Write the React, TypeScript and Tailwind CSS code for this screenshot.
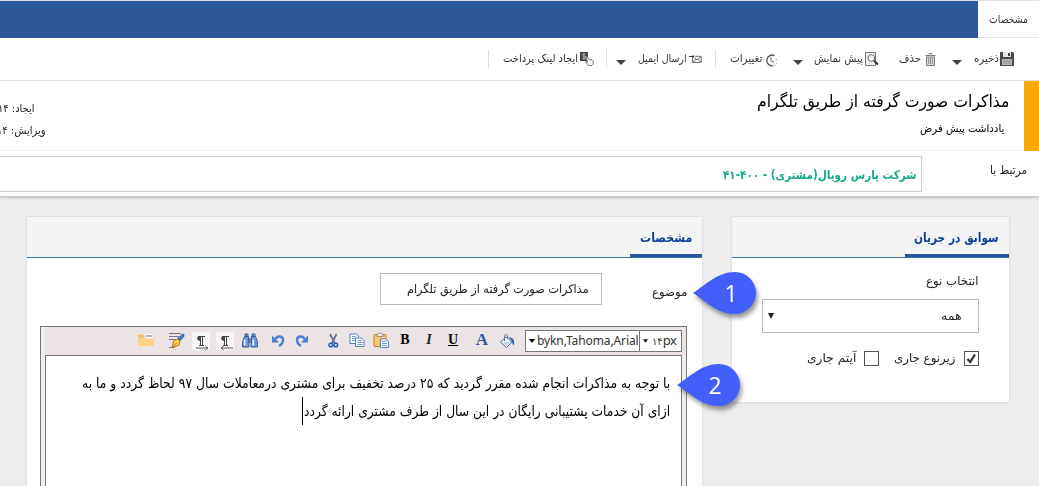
import { useLayoutEffect, useRef, useState, type ReactNode } from "react";

/* A single line of Persian text that condenses itself to the width of its column. */
function Fit({ className = "", children }: { className?: string; children: ReactNode }) {
  const box = useRef<HTMLSpanElement>(null);
  const line = useRef<HTMLSpanElement>(null);
  const [ratio, setRatio] = useState(1);
  useLayoutEffect(() => {
    if (box.current && line.current && line.current.offsetWidth > 0) {
      setRatio(box.current.offsetWidth / line.current.offsetWidth);
    }
  }, []);
  return (
    <span ref={box} className={`block shrink-0 whitespace-nowrap ${className}`}>
      <span ref={line} className="inline-block origin-right" style={{ transform: `scaleX(${ratio})` }}>
        {children}
      </span>
    </span>
  );
}

function Caret({ className = "" }: { className?: string }) {
  return (
    <svg className={`h-[5px] w-[10px] shrink-0 ${className}`} viewBox="0 0 10 5">
      <path d="M0 0h10L5 5z" fill="#444" />
    </svg>
  );
}

function SaveIcon() {
  return (
    <svg className="h-[14px] w-[14px] shrink-0" viewBox="0 0 14 14">
      <path d="M0 0h13l1 1v13H0z" fill="#4a4a4a" />
      <path d="M3 0h8v5H3z" fill="#e4e4e4" />
      <path d="M8 1h2v3H8z" fill="#444" />
      <path d="M2 7h10v6H2z" fill="#b9b9b9" />
      <path d="M3 9h8M3 11h8" stroke="#8b8b8b" />
    </svg>
  );
}
function TrashIcon() {
  return (
    <svg className="h-[13px] w-[11px] shrink-0" viewBox="0 0 11 13">
      <path d="M4 1.5V.5h3v1M.5 2.5h10" stroke="#777" fill="none" />
      <path d="M1.5 4h8v8.5h-8z" fill="#ddd" stroke="#777" />
      <path d="M3.7 5v6M5.5 5v6M7.3 5v6" stroke="#888" />
    </svg>
  );
}
function PreviewIcon() {
  return (
    <svg className="h-[14px] w-[14px] shrink-0" viewBox="0 0 14 14">
      <path d="M.5.5h10v13H.5z" fill="#f2f2f2" stroke="#777" />
      <circle cx="6.3" cy="6" r="3.4" fill="#fafafa" stroke="#666" />
      <path d="M9 8.8l4 3.7" stroke="#333" strokeWidth="2" />
    </svg>
  );
}
function ClockIcon() {
  return (
    <svg className="h-[13px] w-[13px] shrink-0" viewBox="0 0 13 13">
      <path d="M9.6 1.6A5.4 5.4 0 1 0 8 11.8" fill="none" stroke="#555" strokeWidth="1.3" />
      <path d="M6 3.2v3.7l3 1.2" fill="none" stroke="#666" />
      <path d="M11 4.500l1 2M11 8l.5 1.500M8.500 11.900l2-1" stroke="#aaa" />
    </svg>
  );
}
function MailIcon() {
  return (
    <svg className="h-[9px] w-[13px] shrink-0" viewBox="0 0 13 9">
      <path d="M3.500 2.300v5.200h8.800V1.300H6" fill="#f3f3f3" stroke="#777" />
      <path d="M4 7l3-2.500M12 7L9 4.500M5.500 2.500L8 5l4-3.300" fill="none" stroke="#777" />
      <path d="M0 1.500h5M3.300 0L5 1.500 3.300 3" fill="none" stroke="#333" />
    </svg>
  );
}
function PayIcon() {
  return (
    <svg className="h-[14px] w-[14px] shrink-0" viewBox="0 0 14 14">
      <rect width="8" height="9" fill="#444" />
      <path d="M5.500 2H3v2.300h2.500v2.200H2.500M4 1v7" fill="none" stroke="#bbb" strokeWidth=".8" />
      <path d="M6 5.300l1.200-.5 1.700 2.700 3.500.5 1 1-.5 3.500-1 1H8.500L5.500 10l.6-.7 1.600.8z" fill="#fff" stroke="#777" />
    </svg>
  );
}

function FolderIcon() {
  return (
    <svg className="h-5 w-5 -translate-y-px" viewBox="0 0 20 20">
      <path d="M2 4.500h5l1 1.500h9.500V16H2z" fill="#f4bd62" />
      <path d="M9 3.500h8v6H9z" fill="#fdfdfd" stroke="#ddd" strokeWidth=".5" />
      <path d="M10 5h6v2h-6z" fill="#b4b4bd" />
      <path d="M2 7.500h6l1 1h8.500v7.500H2z" fill="#ffd486" />
    </svg>
  );
}
function FormatIcon() {
  return (
    <svg className="h-5 w-5" viewBox="0 0 20 20">
      <path d="M3 2.500h12M3 5.500h10M3 8.500h7M3 16.500h5" stroke="#777" />
      <path d="M16.500 3H18v2.500l-4.500 5L11 8z" fill="#3d78c9" stroke="#315da0" strokeWidth=".6" />
      <path d="M11.500 8l2.500 2-1 4-7 3 1.500-7z" fill="#ffd34d" stroke="#b97919" />
      <path d="M6.500 16.500l4-4.500" stroke="#93601a" />
    </svg>
  );
}
function ParagraphIcon({ back = false }: { back?: boolean }) {
  return (
    <svg className="h-5 w-5" viewBox="0 0 20 20">
      <rect x="1" y="1" width="18" height="18" fill="#f7f6f6" />
      <path d="M11.500 14.500V5.500M9.500 14.500V5.500M7 5.500h7M8 14.500h5" stroke="#444" fill="none" />
      <path d="M9.500 10C5 10 5 5 9.500 5z" fill="#444" />
      {back ? (
        <path d="M18 17H6M8.500 15L6 17l2.500 2" fill="none" stroke="#555" />
      ) : (
        <path d="M5 17h12M14.500 15l2.500 2-2.500 2" fill="none" stroke="#555" />
      )}
    </svg>
  );
}
function BinocularsIcon() {
  return (
    <svg className="h-5 w-5" viewBox="0 0 20 20">
      <g fill="#6f97d8" stroke="#2c5699" strokeWidth=".9">
        <path d="M5 3h3v2.500H5zM12 3h3v2.500h-3z" />
        <path d="M4.500 5.500h4l.5 4.500v6H2.500v-5.500zM11.500 5.500h4l2 5V16H11v-6z" />
        <path d="M8.500 8h3v3h-3z" />
      </g>
      <path d="M4.700 8.500v6M13.200 8.500v6" stroke="#e3edfd" strokeWidth="1.700" />
    </svg>
  );
}
function UndoIcon({ flip = false }: { flip?: boolean }) {
  return (
    <svg className={flip ? "h-5 w-5 -scale-x-100" : "h-5 w-5"} viewBox="0 0 20 20">
      <path d="M7.500 8c2-3.800 7.500-3.300 7.500 1 0 3-1.500 4.500-4 6" fill="none" stroke="#4a7dd6" strokeWidth="2.400" />
      <path d="M4 4.500v7h7z" fill="#4a7dd6" />
    </svg>
  );
}
function CutIcon() {
  return (
    <svg className="h-5 w-5" viewBox="0 0 20 20">
      <path d="M7 3l5 9.500M13.500 3L8.800 12.500" stroke="#64748c" strokeWidth="1.700" />
      <circle cx="7.800" cy="14" r="1.800" fill="none" stroke="#2457b4" strokeWidth="1.500" />
      <circle cx="12.800" cy="14" r="1.800" fill="none" stroke="#2457b4" strokeWidth="1.500" />
    </svg>
  );
}
function CopyIcon() {
  return (
    <svg className="h-5 w-5" viewBox="0 0 20 20">
      <g fill="#f7fbff" stroke="#5481c6">
        <path d="M3 3h6.500l2 2v7.500H3z" />
        <path d="M8.500 7h6L17 9.500v6H8.500z" />
      </g>
      <path d="M5 5.500h4M5 7.500h3M5 9.500h3M10.500 9.500h4M10.500 11.500h5M10.500 13.500h5" stroke="#6c9adb" />
    </svg>
  );
}
function PasteIcon() {
  return (
    <svg className="h-5 w-5" viewBox="0 0 20 20">
      <rect x="3" y="3.500" width="12" height="12" rx="1" fill="#f7c871" stroke="#bd812e" />
      <path d="M6 5.500v-2L8 2h2l2 1.500v2z" fill="#e8e8e8" stroke="#777" strokeWidth=".7" />
      <path d="M9.500 8h5l3 2.500v6h-8z" fill="#f9fcff" stroke="#5481c6" />
      <path d="M11 10.500h4M11 12.500h5M11 14.500h5" stroke="#6c9adb" />
    </svg>
  );
}
function FillIcon() {
  return (
    <svg className="h-5 w-5" viewBox="0 0 20 20">
      <path d="M9 6l6 5-5.500 5.500L3.500 11z" fill="#f3f8ff" stroke="#51719c" />
      <path d="M5.500 11h8L9.500 15z" fill="#bcd2ef" />
      <path d="M7.500 10V5c0-2 3-2 3 0v3" fill="none" stroke="#64748b" />
      <path d="M11.500 6.500c4-.5 6.500 2 5.500 8-1.500-1-2-3-2-4.500z" fill="#2861bd" />
    </svg>
  );
}

function Letter({ className, children }: { className: string; children: ReactNode }) {
  return (
    <span className={`flex h-5 w-5 items-center justify-center pb-[2px] font-['Liberation_Serif',serif] leading-5 ${className}`}>
      {children}
    </span>
  );
}

function Marker({ label, className }: { label: string; className: string }) {
  return (
    <div dir="ltr" className={`absolute z-10 h-[42px] w-[63px] drop-shadow-[2px_4px_2px_rgba(0,0,0,0.4)] ${className}`}>
      <svg className="absolute inset-0 h-full w-full" viewBox="0 0 63 42">
        <path d="M0 21C13 13 24 0 42 0a21 21 0 0 1 0 42C24 42 13 29 0 21z" fill="#425ffb" />
      </svg>
      <span className="absolute left-[23px] top-0 w-[30px] text-center font-['Open_Sans',sans-serif] text-[23px] leading-[42px] text-white">
        {label}
      </span>
    </div>
  );
}

function CardHeader({ tab, children }: { tab: string; children: ReactNode }) {
  return (
    <div className="flex h-[41px] border-b border-[#3a74ac] bg-[#f4f4f4]">
      <div className={`h-10 border-b-[3px] border-[#2a579a] pr-[10px] pt-[11px] text-[13px] font-bold leading-5 text-[#0c3f97] ${tab}`}>
        {children}
      </div>
    </div>
  );
}

export default function App() {
  return (
    <div dir="rtl" className="relative flex h-[486px] w-[1039px] flex-col overflow-hidden bg-[#ededed] font-['DejaVu_Sans',sans-serif] text-[11px] text-[#222]">
      <div className="flex h-[38px] shrink-0 border-t border-[#dce3ed] bg-[#2a579a]">
        <div className="h-full w-[61px] border-b border-[#e5e5e5] bg-white pr-[11px] pt-[9px] text-[11px] leading-5 text-[#333]">
          <Fit className="w-[39px]">مشخصات</Fit>
        </div>
      </div>

      <div className="flex h-[43px] shrink-0 items-center border-b border-[#ddd] bg-white pr-[25px] text-[11px] leading-5 text-[#333]">
        <SaveIcon />
        <Fit className="mr-px w-[25px]">ذخیره</Fit>
        <Caret className="mr-[12px] mt-[7px]" />
        <span className="mr-[16px] flex"><TrashIcon /></span>
        <Fit className="mr-[4px] w-[22px]">حذف</Fit>
        <span className="mr-[20px] flex"><PreviewIcon /></span>
        <Fit className="mr-[2px] w-[49px]">پیش نمایش</Fit>
        <Caret className="mr-[11px] mt-[7px]" />
        <span className="mr-[15px] mt-[3px] flex"><ClockIcon /></span>
        <Fit className="mr-[3px] w-[33px]">تغییرات</Fit>
        <span className="mr-[13px] h-[18px] w-px bg-[#ddd]" />
        <span className="mr-[13px] flex"><MailIcon /></span>
        <Fit className="mr-[2px] w-[49px]">ارسال ایمیل</Fit>
        <Caret className="mr-[12px] mt-[7px]" />
        <span className="mr-[9px] h-[18px] w-px bg-[#ddd]" />
        <span className="mr-[12px] flex"><PayIcon /></span>
        <Fit className="mr-[2px] w-[75px]">ایجاد لینک پرداخت</Fit>
        <span className="mr-[14px] h-[18px] w-px bg-[#ddd]" />
      </div>

      <div className="flex h-[70px] shrink-0 border-b border-[#f4f4f4] bg-white">
        <div className="h-[70px] w-[15px] shrink-0 bg-[#fba704]" />
        <div className="flex-1 pr-[15px] pt-[7px] text-black">
          <Fit className="w-[252px] text-[17px] leading-[26px]">مذاکرات صورت گرفته از طریق تلگرام</Fit>
          <Fit className="mr-[5px] mt-[5px] w-[84px] text-[11px] leading-5">یادداشت پیش فرض</Fit>
        </div>
        <div className="w-[46px] shrink-0 pt-[17px] text-[11px] leading-[22px] text-[#222]">
          <Fit className="mr-[12px] w-[37px]">ایجاد: ۱۴</Fit>
          <Fit className="w-[49px]">ویرایش: ۱۴</Fit>
        </div>
      </div>

      <div className="flex h-[46px] shrink-0 border-b border-[#ccc] bg-white pr-[12px] shadow-[0_1px_2px_rgba(0,0,0,0.2)]">
        <Fit className="mt-[9px] w-[37px] text-[12px] leading-5">مرتبط با</Fit>
        <div className="mr-[68px] mt-[5px] h-[36px] flex-1 border border-l-0 border-[#ccc] pr-[4px] pt-[8px]">
          <Fit className="w-[194px] text-[12px] font-bold leading-5 text-[#17a98c]">شرکت پارس رویال(مشتری) - ۴۰۰-۴۱</Fit>
        </div>
      </div>

      <div className="flex flex-1 items-start gap-[30px] pr-[30px] pt-[20px]">
        <section className="h-[185px] w-[277px] shrink-0 bg-white shadow-[0_0_2px_rgba(0,0,0,0.18)]">
          <CardHeader tab="w-[104px]"><Fit className="w-[85px]">سوابق در جریان</Fit></CardHeader>
          <div className="px-[30px] pt-[13px] text-[12px] leading-5">
            <Fit className="w-[53px]">انتخاب نوع</Fit>
            <div className="mt-[8px] flex h-[34px] items-center justify-between border border-[#bbb] pl-[5px] pr-[16px]">
              <Fit className="w-[21px]">همه</Fit>
              <svg className="h-[6px] w-[6px]" viewBox="0 0 6 6"><path d="M0 0h6L3 6z" fill="#222" /></svg>
            </div>
            <div className="mt-[15px] flex items-center">
              <span className="flex h-[15px] w-[15px] items-center justify-center border border-[#555]">
                <svg className="h-[11px] w-[11px]" viewBox="0 0 11 11"><path d="M1.500 6l2.700 3L9 1.500" fill="none" stroke="#333" strokeWidth="2.300" /></svg>
              </span>
              <Fit className="mr-[8px] w-[62px]">زیرنوع جاری</Fit>
              <span className="mr-[15px] h-[15px] w-[15px] border border-[#555]" />
              <Fit className="mr-[8px] w-[49px]">آیتم جاری</Fit>
            </div>
          </div>
        </section>

        <section className="h-[269px] w-[675px] shrink-0 bg-white shadow-[0_0_2px_rgba(0,0,0,0.18)]">
          <CardHeader tab="w-[72px]"><Fit className="w-[52px]">مشخصات</Fit></CardHeader>
          <div className="flex pr-[15px] pt-[15px]">
            <Fit className="mt-[9px] w-[35px] text-[12px] leading-5">موضوع</Fit>
            <div className="mr-[50px] h-[32px] w-[222px] border border-[#bbb] pr-[12px] pt-[5px]">
              <Fit className="w-[182px] text-[12px] leading-5">مذاکرات صورت گرفته از طریق تلگرام</Fit>
            </div>
          </div>

          <div className="mr-[15px] mt-[21px] flex h-[170px] w-[647px] flex-col border border-b-0 border-[#777] bg-[#eee]">
            <div dir="ltr" className="ml-1 flex h-[28px] shrink-0 items-center bg-[#ece4e4] pl-[91px]">
              <span className="mr-[10px]"><FolderIcon /></span>
              <span className="mr-[5px]"><FormatIcon /></span>
              <span className="mr-[4px]"><ParagraphIcon /></span>
              <span className="mr-[5px]"><ParagraphIcon back /></span>
              <span className="mr-[8px]"><BinocularsIcon /></span>
              <span className="mr-[4px]"><UndoIcon /></span>
              <span className="mr-[11px]"><UndoIcon flip /></span>
              <span className="mr-[4px]"><CutIcon /></span>
              <span className="mr-[4px]"><CopyIcon /></span>
              <span className="mr-[4px]"><PasteIcon /></span>
              <Letter className="mr-[4px] text-[14px] font-bold text-black">B</Letter>
              <Letter className="mr-[4px] text-[14px] font-bold italic text-[#222]">I</Letter>
              <Letter className="mr-[9px] text-[14px] font-bold text-black underline">U</Letter>
              <Letter className="mr-[5px] text-[17px] font-bold text-[#3159a5]">A</Letter>
              <FillIcon />
              <div className="ml-[8px] flex h-[22px] w-[115px] shrink-0 items-center border border-[#777] bg-white pl-[3px] font-['Noto_Sans',sans-serif] text-[12px] text-[#333]">
                <svg className="mr-[2px] h-[4px] w-[6px] shrink-0" viewBox="0 0 6 4"><path d="M0 0h6L3 4z" fill="#000" /></svg>
                <span className="whitespace-nowrap tracking-[-0.1px]">bykn,Tahoma,Arial</span>
              </div>
              <div className="-ml-px flex h-[22px] w-[43px] shrink-0 items-center border border-[#777] bg-white pl-[3px] font-['Noto_Sans','DejaVu_Sans',sans-serif] text-[13px] text-[#333]">
                <svg className="mr-[4px] h-[4px] w-[5px] shrink-0" viewBox="0 0 6 4"><path d="M0 0h6L3 4z" fill="#000" /></svg>
                <span className="flex items-center tracking-[-0.5px]"><span className="text-[10px]">۱۴</span>px</span>
              </div>
            </div>
            <div className="mx-1 flex-1 border border-b-0 border-[#777] bg-white pr-[11px] pt-[13px] text-[14px] leading-[28px] text-black">
              <Fit className="w-[588px]">با توجه به مذاکرات انجام شده مقرر گردید که ۲۵ درصد تخفیف برای مشتری درمعاملات سال ۹۷ لحاظ گردد و ما به</Fit>
              <div className="flex">
                <Fit className="w-[366px]">ازای آن خدمات پشتیبانی رایگان در این سال از طرف مشتری ارائه گردد</Fit>
                <span className="mr-px h-[28px] w-px bg-black" />
              </div>
            </div>
          </div>
        </section>
      </div>

      <Marker label="1" className="left-[693px] top-[272px]" />
      <Marker label="2" className="left-[677px] top-[364px]" />
    </div>
  );
}
